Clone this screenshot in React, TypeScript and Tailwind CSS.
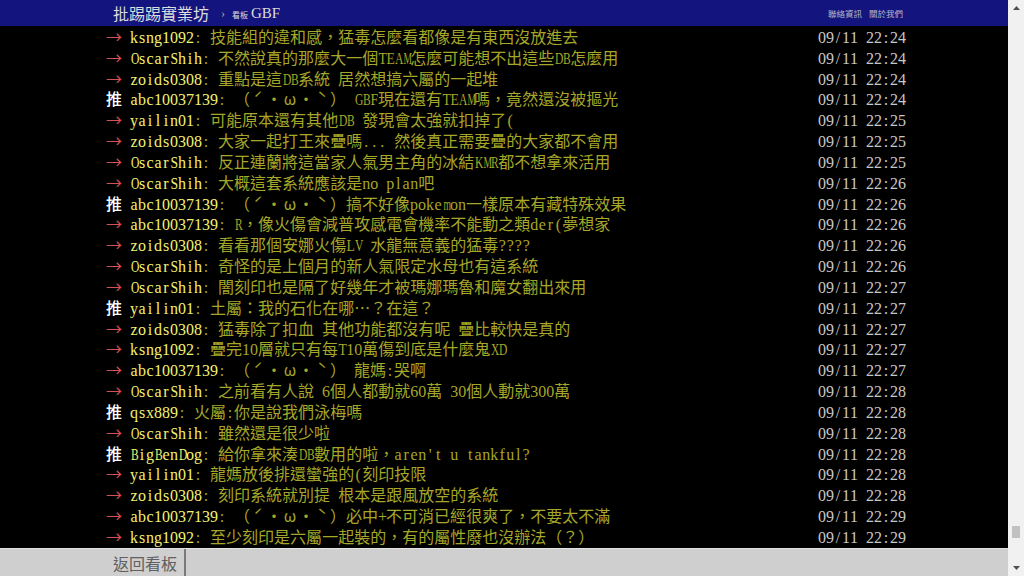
import React from "react";

type Push = { tag: "推" | "→"; user: string; text: string; time: string };

const pushes: Push[] = [
  { tag: "→", user: "ksng1092", text: "技能組的違和感，猛毒怎麼看都像是有東西沒放進去", time: "09/11 22:24" },
  { tag: "→", user: "OscarShih", text: "不然說真的那麼大一個TEAM怎麼可能想不出這些DB怎麼用", time: "09/11 22:24" },
  { tag: "→", user: "zoids0308", text: "重點是這DB系統 居然想搞六屬的一起堆", time: "09/11 22:24" },
  { tag: "推", user: "abc10037139", text: "（ˊ・ω・ˋ） GBF現在還有TEAM嗎，竟然還沒被摳光", time: "09/11 22:24" },
  { tag: "→", user: "yailin01", text: "可能原本還有其他DB 發現會太強就扣掉了(", time: "09/11 22:25" },
  { tag: "→", user: "zoids0308", text: "大家一起打王來疊嗎... 然後真正需要疊的大家都不會用", time: "09/11 22:25" },
  { tag: "→", user: "OscarShih", text: "反正連蘭將這當家人氣男主角的冰結KMR都不想拿來活用", time: "09/11 22:25" },
  { tag: "→", user: "OscarShih", text: "大概這套系統應該是no plan吧", time: "09/11 22:26" },
  { tag: "推", user: "abc10037139", text: "（ˊ・ω・ˋ）搞不好像pokemon一樣原本有藏特殊效果", time: "09/11 22:26" },
  { tag: "→", user: "abc10037139", text: "R，像火傷會減普攻感電會機率不能動之類der(夢想家", time: "09/11 22:26" },
  { tag: "→", user: "zoids0308", text: "看看那個安娜火傷LV 水龍無意義的猛毒????", time: "09/11 22:26" },
  { tag: "→", user: "OscarShih", text: "奇怪的是上個月的新人氣限定水母也有這系統", time: "09/11 22:26" },
  { tag: "→", user: "OscarShih", text: "闇刻印也是隔了好幾年才被瑪娜瑪魯和魔女翻出來用", time: "09/11 22:27" },
  { tag: "推", user: "yailin01", text: "土屬：我的石化在哪…？在這？", time: "09/11 22:27" },
  { tag: "→", user: "zoids0308", text: "猛毒除了扣血 其他功能都沒有呢 疊比較快是真的", time: "09/11 22:27" },
  { tag: "→", user: "ksng1092", text: "疊完10層就只有每T10萬傷到底是什麼鬼XD", time: "09/11 22:27" },
  { tag: "→", user: "abc10037139", text: "（ˊ・ω・ˋ） 龍媽:哭啊", time: "09/11 22:27" },
  { tag: "→", user: "OscarShih", text: "之前看有人說 6個人都動就60萬 30個人動就300萬", time: "09/11 22:28" },
  { tag: "推", user: "qsx889", text: "火屬:你是說我們泳梅嗎", time: "09/11 22:28" },
  { tag: "→", user: "OscarShih", text: "雖然還是很少啦", time: "09/11 22:28" },
  { tag: "推", user: "BigBenDog", text: "給你拿來湊DB數用的啦，aren't u tankful?", time: "09/11 22:28" },
  { tag: "→", user: "yailin01", text: "龍媽放後排還蠻強的(刻印技限", time: "09/11 22:28" },
  { tag: "→", user: "zoids0308", text: "刻印系統就別提 根本是跟風放空的系統", time: "09/11 22:28" },
  { tag: "→", user: "abc10037139", text: "（ˊ・ω・ˋ）必中+不可消已經很爽了，不要太不滿", time: "09/11 22:29" },
  { tag: "→", user: "ksng1092", text: "至少刻印是六屬一起裝的，有的屬性廢也沒辦法（？）", time: "09/11 22:29" },
];

// squeeze wide serif letters into the half-width cell
function cellClass(c: string) {
  if ("MWmw".includes(c)) return "inline-block w-[8px] text-center scale-x-[0.6]";
  if ("ABCDGHKNOQRUVXY".includes(c)) return "inline-block w-[8px] text-center scale-x-[0.72]";
  if ("ETLZFPS".includes(c)) return "inline-block w-[8px] text-center scale-x-[0.85]";
  return "inline-block w-[8px] text-center";
}

// symbols that the CJK font draws narrow but the terminal shows full-width
const FULL = "ˊˋω・（）";

// half-width chars sit in 0.5em cells, like the terminal font
function Mixed({ text }: { text: string }) {
  const parts = text.split(/([\x20-\x7e]+)/);
  return (
    <>
      {parts.map((p, i) =>
        /^[\x20-\x7e]+$/.test(p) ? (
          <span key={i} className="font-['Liberation_Serif',serif]">
            {p.split("").map((c, j) => (
              <span key={j} className={cellClass(c)}>
                {c === " " ? "\u00a0" : c}
              </span>
            ))}
          </span>
        ) : (
          <span key={i}>
            {Array.from(p).map((c, j) =>
              FULL.includes(c) ? (
                <span key={j} className="inline-block w-[16px] text-center">
                  {c}
                </span>
              ) : (
                c
              )
            )}
          </span>
        )
      )}
    </>
  );
}

function Row({ p }: { p: Push }) {
  return (
    <div className="flex h-[20.83px] justify-between whitespace-pre">
      <div className="flex">
        <span className={p.tag === "推" ? "font-medium text-white" : "text-[#d65050]"}>
          {p.tag}
          <Mixed text=" " />
        </span>
        <span className="text-[#f2f272]">
          <Mixed text={p.user} />
        </span>
        <span className="text-[#a6a628]">
          <Mixed text={": " + p.text} />
        </span>
      </div>
      <span className="text-[#c8c8c8]">
        <Mixed text={p.time} />
      </span>
    </div>
  );
}

function Scrollbar() {
  return (
    <div className="flex h-full w-4 flex-col bg-[#f1f1f1]">
      <div className="flex h-4 items-center justify-center">
        <svg width="7" height="4" viewBox="0 0 7 4">
          <polygon points="3.5,0 7,4 0,4" fill="#505050" />
        </svg>
      </div>
      <div className="flex flex-1 flex-col justify-end pb-[22px]">
        <div className="mx-auto h-[12px] w-[8px] bg-[#c1c1c1]" />
      </div>
      <div className="flex h-4 items-center justify-center">
        <svg width="7" height="4" viewBox="0 0 7 4">
          <polygon points="0,0 7,0 3.5,4" fill="#505050" />
        </svg>
      </div>
    </div>
  );
}

export default function App() {
  return (
    <div className="flex h-[576px] w-[1024px] overflow-hidden font-['Liberation_Serif','Noto_Sans_CJK_TC',serif]">
      <div className="flex flex-1 flex-col bg-black">
        {/* topbar */}
        <div className="flex h-[26px] shrink-0 items-center bg-[#14147e] pl-[113px] pr-[105px] text-[#dcdcdc]">
          <span className="font-['Noto_Sans_CJK_TC',sans-serif] text-[16px] leading-none">批踢踢實業坊</span>
          <span className="ml-[12px] text-[12px] text-[#aaa]">›</span>
          <span className="ml-[7px] mt-[3px] font-['Noto_Sans_CJK_TC',sans-serif] text-[8px]">看板</span>
          <span className="ml-[3px] text-[15px]">GBF</span>
          <div className="ml-auto flex gap-[7px] font-['Noto_Sans_CJK_TC',sans-serif] text-[8.5px] text-[#b8b8c8]">
            <span>聯絡資訊</span>
            <span>關於我們</span>
          </div>
        </div>

        {/* pushes */}
        <div className="flex-1 overflow-hidden">
          <div className="ml-[106px] w-[800px] font-['Noto_Sans_CJK_TC',sans-serif] text-[16px] leading-[20.83px]">
            {pushes.map((p, i) => (
              <Row key={i} p={p} />
            ))}
          </div>
        </div>

        {/* action bar */}
        <div className="flex h-[28px] shrink-0 border-t border-[#e2e2e2] bg-[#cfcfcf]">
          <div className="ml-[106px] flex items-center border-r-2 border-[#7a7a7a] px-[7px] font-['Noto_Sans_CJK_TC',sans-serif] text-[16px] text-[#606060]">
            返回看板
          </div>
        </div>
      </div>
      <Scrollbar />
    </div>
  );
}
